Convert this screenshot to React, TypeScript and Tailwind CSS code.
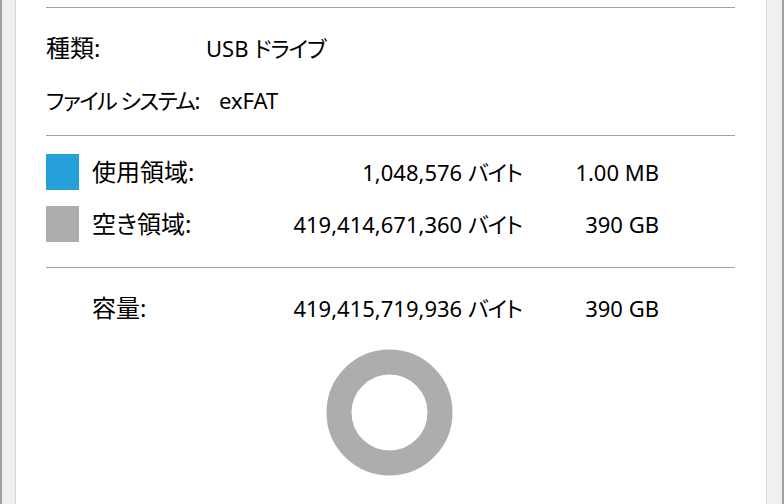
const FONT = "font-['Noto_Sans','Noto_Sans_CJK_JP',sans-serif] [font-feature-settings:'palt']";

const SPACE_ROWS = [
  { color: "bg-[#26a0da]", label: "使用領域:", bytes: "1,048,576", size: "1.00 MB" },
  { color: "bg-[#adadad]", label: "空き領域:", bytes: "419,414,671,360", size: "390 GB" },
];

function Divider() {
  return <div className="h-px w-full bg-[#a0a0a0]" />;
}

function SpaceRow({
  color,
  label,
  bytes,
  size,
}: {
  color?: string;
  label: string;
  bytes: string;
  size: string;
}) {
  return (
    <div className="flex h-[52px] items-center">
      <div className={`h-[36px] w-[33px] shrink-0 ${color ?? ""}`} />
      <div className="ml-[13px] w-[150px] shrink-0 text-[24px]">{label}</div>
      <div className="w-[280px] shrink-0 text-right">
        {bytes} <span className="tracking-[-1px]">バイト</span>
      </div>
      <div className="w-[137px] shrink-0 text-right">{size}</div>
    </div>
  );
}

export default function App() {
  return (
    <div className={`flex h-[504px] w-[784px] overflow-hidden border-x-2 border-[#a0a0a0] bg-[#f0f0f0] text-[22px] leading-none text-black ${FONT}`}>
      <div className="ml-[13px] mr-[15px] flex flex-1 flex-col border-x border-[#d9d9d9] bg-white pl-[30px] pr-[31px] pt-[7px]">
        <Divider />

        {/* type / file system */}
        <div className="mt-[14px] flex h-[52px] items-center">
          <div className="w-[160px] shrink-0 text-[24px]">種類:</div>
          <div>
            USB <span className="tracking-[-1px]">ドライブ</span>
          </div>
        </div>
        <div className="flex h-[52px] items-center">
          <div className="w-[173px] shrink-0 tracking-[-1.5px]">ファイル システム:</div>
          <div>exFAT</div>
        </div>

        <div className="mt-[9px]">
          <Divider />
        </div>

        {/* used / free */}
        <div className="mt-[10px]">
          {SPACE_ROWS.map((r) => (
            <SpaceRow key={r.label} {...r} />
          ))}
        </div>

        <div className="mt-[17px]">
          <Divider />
        </div>

        <div className="mt-[14px]">
          <SpaceRow label="容量:" bytes="419,415,719,936" size="390 GB" />
        </div>

        {/* usage donut */}
        <div className="ml-[280px] mt-[15px]">
          <svg width="127" height="127" viewBox="0 0 127 127">
            <circle cx="63.5" cy="63.5" r="50.5" fill="none" stroke="#adadad" strokeWidth="25" />
          </svg>
        </div>
      </div>
    </div>
  );
}
